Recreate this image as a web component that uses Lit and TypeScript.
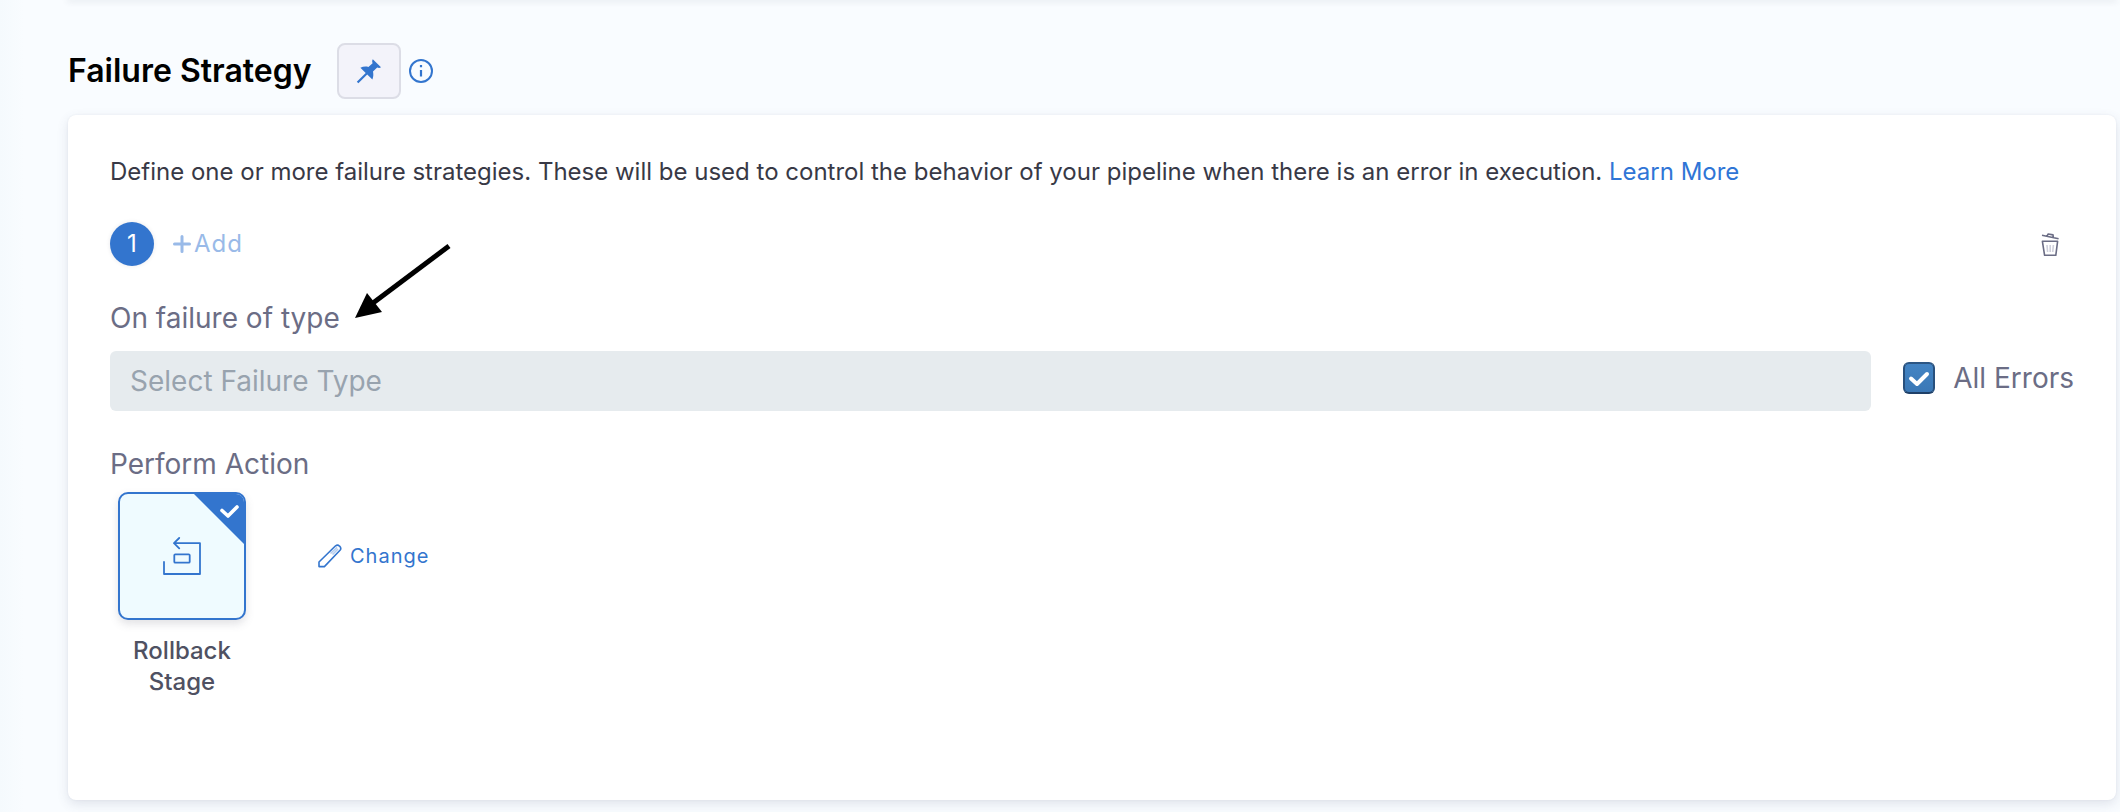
import { LitElement, html, css } from "lit";
import { customElement, state } from "lit/decorators.js";

@customElement("app-root")
export class AppRoot extends LitElement {
  @state() private allErrors = true;

  static styles = css`
    :host {
      display: block;
      box-sizing: border-box;
      min-height: 100vh;
      padding: 0 4px 12px 68px;
      overflow: hidden;
      background: linear-gradient(90deg, #f5fafd 0, #f9fcff 24px);
      font-family: Inter, sans-serif;
      color: #383946;
    }
    * {
      box-sizing: border-box;
    }
    button {
      font: inherit;
      color: inherit;
      background: none;
      border: 0;
      margin: 0;
      padding: 0;
      cursor: pointer;
    }
    svg {
      display: block;
      flex: none;
    }
    .previous {
      height: 0;
      box-shadow: 0 0 6px 1px rgba(60, 70, 90, 0.2);
    }
    .header {
      display: flex;
      align-items: center;
      padding: 43px 0 16px;
    }
    .title {
      margin: 0 25px 0 0;
      font-size: 32px;
      line-height: 40px;
      font-weight: 600;
      color: #000;
    }
    .pin {
      display: grid;
      place-items: center;
      width: 64px;
      height: 56px;
      margin-right: 8px;
      background: #f3f3fa;
      border: 2px solid #dcdde6;
      border-radius: 8px;
    }
    .card {
      min-height: 685px;
      padding: 41px 42px;
      background: #fff;
      border-radius: 8px;
      box-shadow: 0 4px 12px rgba(70, 80, 110, 0.14), 0 0 2px rgba(70, 80, 110, 0.08);
    }
    .description {
      margin: 0 0 34px;
      font-size: 24px;
      line-height: 32px;
    }
    .link {
      color: #2f75d6;
      text-decoration: none;
    }
    .tabs {
      display: flex;
      align-items: center;
      margin-bottom: 34px;
      font-size: 24px;
      line-height: 32px;
    }
    .step {
      width: 44px;
      height: 44px;
      margin-right: 19px;
      border-radius: 50%;
      background: #3375ce;
      color: #fff;
      box-shadow: 0 0 4px rgba(40, 41, 61, 0.1);
    }
    .add {
      display: flex;
      align-items: center;
      gap: 3px;
      color: #99bae8;
      letter-spacing: 1px;
    }
    .delete {
      margin: 2px 14px 0 auto;
    }
    .label {
      position: relative;
      display: block;
      width: max-content;
      font-size: 28px;
      line-height: 36px;
      color: #6b6d85;
    }
    .arrow {
      position: absolute;
      left: calc(100% + 15px);
      top: -57px;
    }
    .types {
      display: flex;
      align-items: center;
      gap: 32px;
      margin: 15px 0 35px;
    }
    .select {
      flex: 1;
      min-width: 0;
      height: 60px;
      padding: 0 20px;
      border: 0;
      border-radius: 6px;
      background: #e6ebee;
      font: 28px/36px Inter, sans-serif;
      color: #98a3ae;
    }
    .select::placeholder {
      color: #98a3ae;
      opacity: 1;
    }
    .check {
      display: flex;
      align-items: center;
      gap: 18px;
      padding-bottom: 6px;
      font-size: 28px;
      line-height: 36px;
      color: #6b6d85;
    }
    .box {
      display: grid;
      width: 32px;
      height: 32px;
    }
    .box > * {
      grid-area: 1 / 1;
    }
    .box input {
      appearance: none;
      width: 32px;
      height: 32px;
      margin: 0;
      border: 2px solid #8a8da0;
      border-radius: 6px;
    }
    .box input:checked {
      border-color: #2c5684 #28507d #1f4068;
      background: linear-gradient(#4384c4, #3b78b6);
    }
    .box svg {
      pointer-events: none;
    }
    .actions {
      display: flex;
      align-items: flex-start;
      gap: 71px;
      padding: 10px 8px 0;
    }
    .action {
      display: flex;
      flex-direction: column;
      align-items: center;
      gap: 15px;
      width: 128px;
      font-size: 24px;
      line-height: 31px;
      font-weight: 500;
      color: #4f5162;
    }
    .tile {
      position: relative;
      display: grid;
      place-items: center;
      width: 128px;
      height: 128px;
      border: 2px solid #3375ce;
      border-radius: 10px;
      background: #effbff;
      box-shadow: 0 4px 8px rgba(96, 97, 112, 0.18);
      overflow: hidden;
    }
    .corner {
      position: absolute;
      top: 0;
      right: 0;
    }
    .change {
      display: flex;
      align-items: center;
      gap: 7px;
      height: 128px;
      font-size: 20px;
      line-height: 28px;
      letter-spacing: 1px;
      color: #3375ce;
    }
  `;

  render() {
    return html`
      <div class="previous"></div>
      <header class="header">
        <h2 class="title">Failure Strategy</h2>
        <button class="pin" aria-label="Pin">
          <svg width="26" height="26" viewBox="0 0 26 26" fill="#3375ce">
            <path d="M16.8 1.2 25 9.2C23.8 10.2 22.4 10 21.2 9.5L17 13.6C17.6 16.6 17.4 19 16.4 21.6L11.2 16.4 2.4 25.2 0.8 23.8 9.7 14.9 4.4 9.8C6.8 8.6 9.4 8.3 12.4 8.9L16.6 5.2C16 3.6 16 2.4 16.8 1.2Z" />
          </svg>
        </button>
        <svg width="24" height="24" viewBox="0 0 24 24" fill="none" stroke="#3375ce">
          <circle cx="12" cy="12" r="11" stroke-width="2" />
          <path d="M12 6V8.2M12 11V17.4" stroke-width="2.2" />
        </svg>
      </header>
      <section class="card">
        <p class="description">
          Define one or more failure strategies. These will be used to control the behavior of your pipeline when there is an error in execution.
          <a class="link" href="#">Learn More</a>
        </p>
        <div class="tabs">
          <button class="step">1</button>
          <button class="add">
            <svg width="18" height="18" viewBox="0 0 18 18" stroke="#99bae8" stroke-width="3" stroke-linecap="round">
              <path d="M9 1.5V16.5M1.5 9H16.5" />
            </svg>
            Add
          </button>
          <button class="delete" aria-label="Delete">
            <svg width="20" height="24" viewBox="0 0 20 24" fill="none" stroke="#6b6d85" stroke-width="1.6" stroke-linejoin="round">
              <path d="M2 2.2 18.6 5.8M7 3.2 8.2 1 13 1.9 13.4 4.4" />
              <path d="M2.4 8.3H17.6L15.8 22.3H4.6Z" />
              <path d="M7 12 7.6 19M10.2 12V19M13.4 12 12.7 19" stroke="#cfd0dc" />
            </svg>
          </button>
        </div>
        <label class="label" for="types">
          On failure of type
          <svg class="arrow" width="98" height="76" viewBox="0 0 98 76">
            <path d="M94 3 18 60" stroke="#000" stroke-width="5" />
            <path d="M0 75 12 50 27 69Z" />
          </svg>
        </label>
        <div class="types">
          <input class="select" id="types" type="text" placeholder="Select Failure Type" ?disabled=${this.allErrors} />
          <label class="check">
            <span class="box">
              <input
                type="checkbox"
                .checked=${this.allErrors}
                @change=${(e: Event) => (this.allErrors = (e.target as HTMLInputElement).checked)}
              />
              <svg width="32" height="32" viewBox="0 0 32 32" fill="none" stroke="#fff" stroke-width="4" stroke-linecap="round" stroke-linejoin="round">
                <path d="M8 16.5 14 22 24 12" />
              </svg>
            </span>
            All Errors
          </label>
        </div>
        <span class="label">Perform Action</span>
        <div class="actions">
          <button class="action">
            <span class="tile">
              <svg width="38" height="38" viewBox="0 0 38 38" fill="none" stroke="#3375ce" stroke-width="1.8" stroke-linejoin="round" stroke-linecap="round">
                <path d="M1 25V37H37V6.2H11M16.2 1 11 6.2 16.2 11.4" />
                <rect x="11.3" y="17.3" width="15.4" height="8.4" rx="1" />
              </svg>
              <svg class="corner" width="50" height="50" viewBox="0 0 50 50">
                <path d="M0 0H50V50Z" fill="#3375ce" />
                <path d="M28 16.5 34 22 43 13" fill="none" stroke="#fff" stroke-width="3.6" stroke-linecap="round" stroke-linejoin="round" />
              </svg>
            </span>
            <span>Rollback Stage</span>
          </button>
          <button class="change">
            <svg width="26" height="24" viewBox="0 0 26 24" fill="none" stroke="#3375ce" stroke-width="1.6" stroke-linejoin="round">
              <path d="M2 18 18.6 1.8C20.2.6 21.4 1 22.6 2.2 23.9 3.4 24.2 4.8 23 6.2L7.4 22.6H2Z" />
              <path d="M13.5 9.5 20 3.4M15.5 10.5 21 5" stroke="#b5cdee" />
            </svg>
            Change
          </button>
        </div>
      </section>
    `;
  }
}
